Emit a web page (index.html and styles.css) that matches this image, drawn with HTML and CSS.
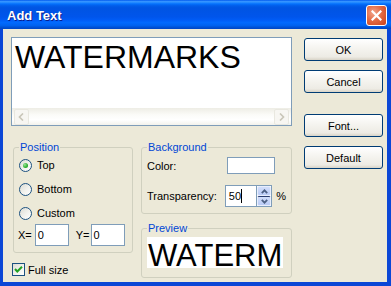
FILE: index.html
```html
<!DOCTYPE html>
<html>
<head>
<meta charset="utf-8">
<title>Add Text</title>
<link rel="stylesheet" href="styles.css">
</head>
<body>
<div class="window">
  <div class="titlebar">
    <span class="title">Add Text</span>
    <span class="close"><svg width="11" height="11" viewBox="0 0 11 11"><path d="M1.5 1.5 L9.5 9.5 M9.5 1.5 L1.5 9.5" stroke="#fff" stroke-width="2.2" stroke-linecap="square"/></svg></span>
  </div>
  <div class="client">
    <div class="left">
      <div class="editor">
        <div class="editor-text">WATERMARKS</div>
        <div class="hscroll">
          <span class="sbtn"><svg width="7" height="8" viewBox="0 0 7 8"><polyline points="5,0.5 1.5,4 5,7.5" fill="none" stroke="#C8C5B8" stroke-width="1.6"/></svg></span>
          <span class="strack"></span>
          <span class="sbtn"><svg width="7" height="8" viewBox="0 0 7 8"><polyline points="2,0.5 5.5,4 2,7.5" fill="none" stroke="#C8C5B8" stroke-width="1.6"/></svg></span>
        </div>
      </div>
      <div class="lower">
        <div class="col-pos">
          <fieldset class="group pos">
            <legend>Position</legend>
            <div class="radio-row"><span class="radio checked"><span class="dot"></span></span><span>Top</span></div>
            <div class="radio-row"><span class="radio"></span><span>Bottom</span></div>
            <div class="radio-row last"><span class="radio"></span><span>Custom</span></div>
            <div class="xy-row">
              <span class="xy-label">X=</span>
              <span class="edit small">0</span>
              <span class="xy-label y">Y=</span>
              <span class="edit small">0</span>
            </div>
          </fieldset>
          <div class="check-row">
            <span class="checkbox"><svg width="11" height="11" viewBox="0 0 11 11"><polyline points="2,5 4.3,7.5 9,2.8" fill="none" stroke="#21A121" stroke-width="2"/></svg></span>
            <span>Full size</span>
          </div>
        </div>
        <div class="col-right">
          <fieldset class="group bg">
            <legend>Background</legend>
            <div class="color-row">
              <span class="field-label color-label">Color:</span>
              <span class="swatch"></span>
            </div>
            <div class="trans-row">
              <span class="field-label trans-label">Transparency:</span>
              <span class="edit trans">50<span class="caret"></span></span>
              <span class="spin">
                <span class="spin-btn up"><svg width="7" height="5" viewBox="0 0 7 5"><polyline points="0.8,4.2 3.5,1.3 6.2,4.2" fill="none" stroke="#4D6185" stroke-width="1.8"/></svg></span>
                <span class="spin-btn down"><svg width="7" height="5" viewBox="0 0 7 5"><polyline points="0.8,0.8 3.5,3.7 6.2,0.8" fill="none" stroke="#4D6185" stroke-width="1.8"/></svg></span>
              </span>
              <span class="pct">%</span>
            </div>
          </fieldset>
          <fieldset class="group preview">
            <legend>Preview</legend>
            <div class="preview-box"><span class="preview-text">WATERM</span></div>
          </fieldset>
        </div>
      </div>
    </div>
    <div class="buttons">
      <div class="btn ok">OK</div>
      <div class="btn cancel">Cancel</div>
      <div class="btn font">Font...</div>
      <div class="btn default">Default</div>
    </div>
  </div>
</div>
</body>
</html>
```

FILE: styles.css
```css
* { box-sizing: border-box; }

body {
  margin: 0;
  font-family: "Liberation Sans", Arial, sans-serif;
  font-size: 11px;
  color: #000;
}

.window {
  width: 391px;
  height: 286px;
  background: #0B47D6;
  display: flex;
  flex-direction: column;
  overflow: hidden;
}

.titlebar {
  flex: none;
  height: 29px;
  display: flex;
  align-items: flex-start;
  padding: 3px 0 0 7px;
  background: linear-gradient(to bottom,
    #0058EE 0%, #3593FF 5%, #288EFF 8%, #127DFF 11%, #036FFC 14%,
    #0262EE 18%, #0057E5 24%, #0054E3 30%, #0055EB 58%, #005BF5 68%,
    #026AFE 78%, #0062EF 88%, #0052D6 94%, #0046C4 100%);
}

.title {
  line-height: 26px;
  font-size: 13px;
  font-weight: bold;
  color: #fff;
  text-shadow: 1px 1px 0 #0A1E8C;
}

.close {
  margin-left: auto;
  margin-right: 4px;
  margin-top: 2px;
  width: 21px;
  height: 21px;
  border: 1px solid #fff;
  border-radius: 3px;
  background: radial-gradient(circle at 35% 35%, #F2A58C 0%, #E36B45 45%, #C9401A 100%);
  display: flex;
  align-items: center;
  justify-content: center;
}

.client {
  flex: 1;
  margin: 0 4px 4px 3px;
  background: #ECE9D8;
  display: flex;
  align-items: flex-start;
  padding: 8px 0 0 8px;
}

.left {
  width: 281px;
  flex: none;
}

/* main text editor */
.editor {
  width: 281px;
  height: 89px;
  border: 1px solid #7F9DB9;
  background: #fff;
  display: flex;
  flex-direction: column;
}

.editor-text {
  flex: 1;
  font-size: 32px;
  line-height: 36px;
  padding: 1px 0 0 3px;
  white-space: nowrap;
  overflow: hidden;
}

.hscroll {
  flex: none;
  height: 17px;
  display: flex;
  align-items: center;
  padding: 0 2px;
  background: linear-gradient(to bottom, #EEEDE5 0%, #FBFBF8 40%, #FFFFFF 70%, #F3F2EC 100%);
}

.sbtn {
  width: 15px;
  height: 16px;
  border: 1px solid #E9E8E0;
  border-radius: 2px;
  background: #F7F6F2;
  display: flex;
  align-items: center;
  justify-content: center;
}

.strack { flex: 1; }

/* lower area */
.lower {
  display: flex;
  margin-top: 15px;
}

.col-pos {
  width: 122px;
  flex: none;
}

.col-right {
  width: 151px;
  flex: none;
  margin-left: 8px;
}

.group {
  margin: 0;
  min-width: 0;
  border: 1px solid #D0D0BF;
  border-radius: 3px;
  padding: 3px 5px 6px 5px;
}

.group legend {
  padding: 0 1px;
  color: #0046D5;
  line-height: 13px;
  font-size: 11px;
}

.pos {
  width: 120px;
  margin-left: 2px;
}

.radio-row {
  height: 16px;
  display: flex;
  align-items: center;
  gap: 5px;
  margin-bottom: 8px;
}

.radio-row.last { margin-bottom: 3px; }

.radio {
  width: 13px;
  height: 13px;
  border: 1px solid #1C5180;
  border-radius: 50%;
  background: linear-gradient(135deg, #DCDCD4 0%, #F2F2EE 55%, #FFFFFF 100%);
  display: flex;
  align-items: center;
  justify-content: center;
}

.dot {
  width: 5px;
  height: 5px;
  border-radius: 50%;
  background: radial-gradient(circle at 35% 35%, #9BE39B 0%, #2DB02D 60%, #1E8F1E 100%);
}

.xy-row {
  height: 22px;
  display: flex;
  align-items: center;
}

.xy-label {
  margin-left: -1px;
  margin-right: 3px;
}

.xy-label.y {
  margin-left: 7px;
  margin-right: 1px;
}

.edit {
  height: 22px;
  border: 1px solid #7F9DB9;
  background: #fff;
  display: flex;
  align-items: center;
  padding-left: 2px;
}

.edit.small { width: 34px; }

.check-row {
  margin-top: 10px;
  margin-left: 1px;
  height: 13px;
  display: flex;
  align-items: center;
  gap: 3px;
}

.checkbox {
  width: 13px;
  height: 13px;
  border: 1px solid #1C5180;
  background: linear-gradient(135deg, #DCDCD4 0%, #F2F2EE 55%, #FFFFFF 100%);
  display: flex;
  align-items: center;
  justify-content: center;
}

/* background group */
.color-row {
  height: 17px;
  display: flex;
  align-items: center;
}

.color-label { width: 80px; }

.swatch {
  width: 48px;
  height: 17px;
  border: 1px solid #7F9DB9;
  background: #fff;
}

.trans-row {
  margin-top: 11px;
  height: 22px;
  display: flex;
  align-items: center;
}

.trans-label { width: 79px; }

.edit.trans {
  width: 33px;
  padding-left: 3px;
}

.caret {
  width: 1px;
  height: 14px;
  background: #000;
}

.spin {
  width: 15px;
  height: 22px;
  display: flex;
  flex-direction: column;
  border-top: 1px solid #7F9DB9;
  border-bottom: 1px solid #7F9DB9;
  border-right: 1px solid #7F9DB9;
  background: #fff;
}

.spin-btn {
  flex: 1;
  display: flex;
  align-items: center;
  justify-content: center;
  background: linear-gradient(to bottom, #D2DEFB 0%, #BACBF5 100%);
  border: 1px solid #E8EEFD;
  border-radius: 2px;
}

.spin-btn.down { border-top-color: #2A3D70; }

.pct { margin-left: 4px; }

/* preview group */
.bg { width: 151px; }

.preview {
  width: 151px;
  margin-top: 8px;
  padding: 2px 8px 9px 5px;
}

.preview-box {
  width: 136px;
  height: 31px;
  background: #fff;
  overflow: hidden;
  white-space: nowrap;
  padding-left: 1px;
}

.preview-text {
  font-size: 31px;
  line-height: 38px;
}

/* buttons */
.buttons {
  width: 79px;
  flex: none;
  margin-left: 12px;
  margin-top: 1px;
  display: flex;
  flex-direction: column;
}

.btn {
  height: 23px;
  border: 1px solid #003C74;
  border-radius: 3px;
  background: linear-gradient(to bottom, #FFFFFF 0%, #F6F5F1 40%, #EDEBE4 85%, #D8D3C7 100%);
  display: flex;
  align-items: center;
  justify-content: center;
}

.btn.cancel { margin-top: 9px; }
.btn.font { margin-top: 21px; }
.btn.default { margin-top: 9px; }
```
